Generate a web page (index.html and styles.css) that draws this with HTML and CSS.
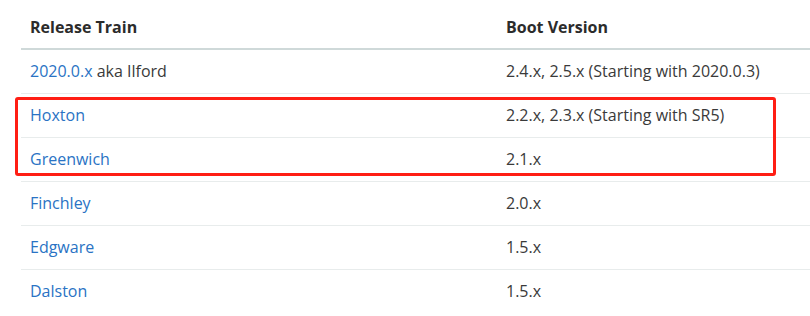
FILE: index.html
```html
<!DOCTYPE html>
<html>
<head>
<meta charset="utf-8">
<link rel="stylesheet" href="styles.css">
</head>
<body>
<div class="wrap">
  <table class="versions">
    <thead>
      <tr><th class="c1">Release Train</th><th class="c2">Boot Version</th></tr>
    </thead>
    <tbody>
      <tr><td><a href="#">2020.0.x</a> aka Ilford</td><td>2.4.x, 2.5.x (Starting with 2020.0.3)</td></tr>
      <tr><td><a href="#">Hoxton</a></td><td>2.2.x, 2.3.x (Starting with SR5)</td></tr>
      <tr><td><a href="#">Greenwich</a></td><td>2.1.x</td></tr>
      <tr><td><a href="#">Finchley</a></td><td>2.0.x</td></tr>
      <tr><td><a href="#">Edgware</a></td><td>1.5.x</td></tr>
      <tr><td><a href="#">Dalston</a></td><td>1.5.x</td></tr>
    </tbody>
  </table>
  <div class="highlight"></div>
</div>
</body>
</html>
```
FILE: styles.css
```css
html, body {
  margin: 0;
  padding: 0;
  background: #fff;
}
body {
  font-family: "Open Sans", "Liberation Sans", sans-serif;
  font-size: 16px;
  color: #333;
}
.wrap {
  position: relative;
  padding-left: 21px;
  padding-top: 3px;
  overflow: hidden;
  width: 789px;
}
.versions {
  border-collapse: collapse;
  width: 820px;
  table-layout: fixed;
}
.versions th {
  text-align: left;
  font-weight: 700;
  color: #2b2b2b;
  height: 46px;
  box-sizing: border-box;
  padding: 13px 9px 0;
  vertical-align: top;
  line-height: 22px;
  border-bottom: 2px solid #cfd9d9;
}
.versions .c1 { width: 476px; }
.versions td {
  height: 44px;
  box-sizing: border-box;
  padding: 0 9px;
  line-height: 22px;
  vertical-align: middle;
  border-bottom: 1px solid #e8ecec;
  color: #3a3a3a;
}
.versions tbody tr:last-child td { border-bottom: none; }
.versions a {
  color: #2a73c4;
  text-decoration: none;
}
.highlight {
  position: absolute;
  left: 15px;
  top: 97px;
  width: 761px;
  height: 79px;
  box-sizing: border-box;
  border: 3px solid #ff1e14;
  border-radius: 3px;
}
```
